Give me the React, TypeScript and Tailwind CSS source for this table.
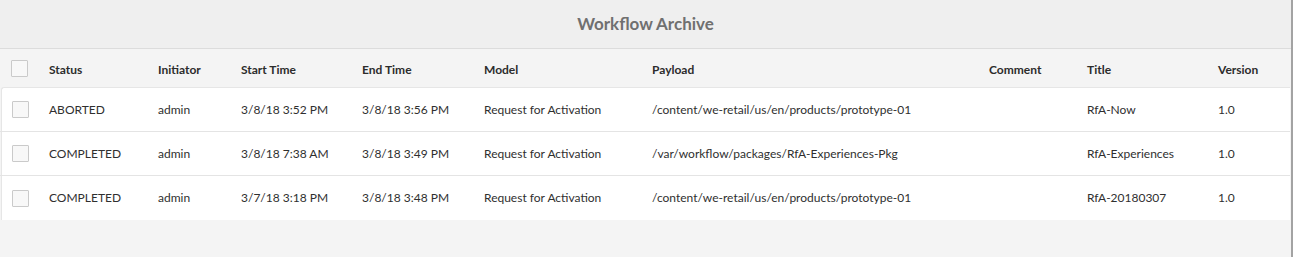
import React from "react";

type Row = {
  status: string;
  initiator: string;
  start: string;
  end: string;
  model: string;
  payload: string;
  comment: string;
  title: string;
  version: string;
};

const rows: Row[] = [
  {
    status: "ABORTED",
    initiator: "admin",
    start: "3/8/18 3:52 PM",
    end: "3/8/18 3:56 PM",
    model: "Request for Activation",
    payload: "/content/we-retail/us/en/products/prototype-01",
    comment: "",
    title: "RfA-Now",
    version: "1.0",
  },
  {
    status: "COMPLETED",
    initiator: "admin",
    start: "3/8/18 7:38 AM",
    end: "3/8/18 3:49 PM",
    model: "Request for Activation",
    payload: "/var/workflow/packages/RfA-Experiences-Pkg",
    comment: "",
    title: "RfA-Experiences",
    version: "1.0",
  },
  {
    status: "COMPLETED",
    initiator: "admin",
    start: "3/7/18 3:18 PM",
    end: "3/8/18 3:48 PM",
    model: "Request for Activation",
    payload: "/content/we-retail/us/en/products/prototype-01",
    comment: "",
    title: "RfA-20180307",
    version: "1.0",
  },
];

const cols =
  "grid grid-cols-[49px_109px_83px_121px_122px_168px_337px_98px_131px_1fr] items-center";

function Checkbox({ inRow = false }: { inRow?: boolean }) {
  return (
    <div
      className={`${
        inRow ? "ml-[12px]" : "ml-[11px]"
      } h-[17px] w-[17px] border border-[#cacaca] bg-[#f8f8f8] rounded-[1px]`}
    />
  );
}

export default function App() {
  return (
    <div
      className="h-[257px] w-[1293px] bg-[#f4f4f4] border-r-2 border-[#a3a3a3] flex flex-col text-[#2f2f2f]"
      style={{ fontFamily: "Lato, 'Open Sans', sans-serif" }}
    >
      {/* title bar */}
      <div className="h-[49px] shrink-0 bg-[#efefef] border-b border-[#dcdcdc] flex items-center justify-center">
        <h1 className="text-[17px] font-bold text-[#707070]">Workflow Archive</h1>
      </div>

      {/* column header */}
      <div className={`${cols} h-[38px] text-[12px] font-bold text-[#2c2c2c]`}>
        <Checkbox />
        <span className="pt-[3px]">Status</span>
        <span className="pt-[3px]">Initiator</span>
        <span className="pt-[3px]">Start Time</span>
        <span className="pt-[3px]">End Time</span>
        <span className="pt-[3px]">Model</span>
        <span className="pt-[3px]">Payload</span>
        <span className="pt-[3px]">Comment</span>
        <span className="pt-[3px]">Title</span>
        <span className="pt-[3px]">Version</span>
      </div>

      {/* rows */}
      <div className="ml-px mr-px bg-white rounded-tl-[3px] border-l border-t border-[#e6e6e6]">
        {rows.map((r, i) => (
          <div
            key={i}
            className={`${cols} -ml-[2px] h-[44px] text-[12px] ${
              i < rows.length - 1 ? "border-b border-[#e4e4e4]" : ""
            }`}
          >
            <Checkbox inRow />
            <span>{r.status}</span>
            <span>{r.initiator}</span>
            <span>{r.start}</span>
            <span>{r.end}</span>
            <span>{r.model}</span>
            <span>{r.payload}</span>
            <span>{r.comment}</span>
            <span>{r.title}</span>
            <span>{r.version}</span>
          </div>
        ))}
      </div>
    </div>
  );
}
